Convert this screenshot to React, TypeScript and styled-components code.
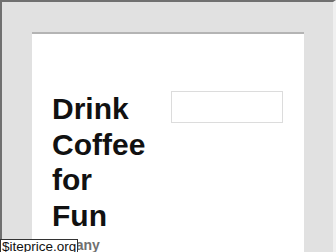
import React from 'react';
import styled, { createGlobalStyle } from 'styled-components';

const GlobalStyle = createGlobalStyle`
  html, body {
    margin: 0;
    padding: 0;
    width: 336px;
    height: 252px;
    overflow: hidden;
    background: #e1e1e1;
  }
  * {
    box-sizing: border-box;
  }
`;

const Frame = styled.div`
  width: 336px;
  height: 252px;
  border-top: 2px solid #707070;
  border-left: 2px solid #707070;
  border-right: 3px solid #f0f0f0;
  background: #e1e1e1;
  padding: 30px 0 0 30px;
  overflow: hidden;
`;

const Card = styled.main`
  width: 272px;
  height: 240px;
  background: #fff;
  border-top: 2px solid #b4b4b4;
  padding: 57px 21px 0 20px;
  font-family: 'Liberation Sans', Arial, sans-serif;
`;

const Hero = styled.section`
  display: flex;
  justify-content: space-between;
  align-items: flex-start;
`;

const Title = styled.h1`
  margin: 0;
  width: 97px;
  font-size: 30px;
  line-height: 35.5px;
  font-weight: 700;
  color: #111;
`;

const SearchBox = styled.input`
  width: 112px;
  height: 32px;
  margin: 0;
  padding: 0 6px;
  border: 1px solid #dcdcdc;
  background: #fff;
  outline: none;
`;

const Tagline = styled.p`
  margin: 4px 0 0 -16px;
  font-size: 14px;
  line-height: 16px;
  font-weight: 700;
  color: #707070;
`;

const StatusLabel = styled.div`
  position: fixed;
  left: 0;
  top: 239px;
  height: 16px;
  padding: 0 1px;
  background: #fff;
  border: 1px solid #333;
  font-family: 'Liberation Sans', Arial, sans-serif;
  font-size: 13.5px;
  line-height: 14px;
  color: #111;
  white-space: nowrap;
`;

export default function App() {
  return (
    <>
      <GlobalStyle />
      <Frame>
        <Card>
          <Hero>
            <Title>Drink Coffee for Fun</Title>
            <SearchBox type="text" aria-label="Search" />
          </Hero>
          <Tagline>Company</Tagline>
        </Card>
      </Frame>
      <StatusLabel>$iteprice.org</StatusLabel>
    </>
  );
}
